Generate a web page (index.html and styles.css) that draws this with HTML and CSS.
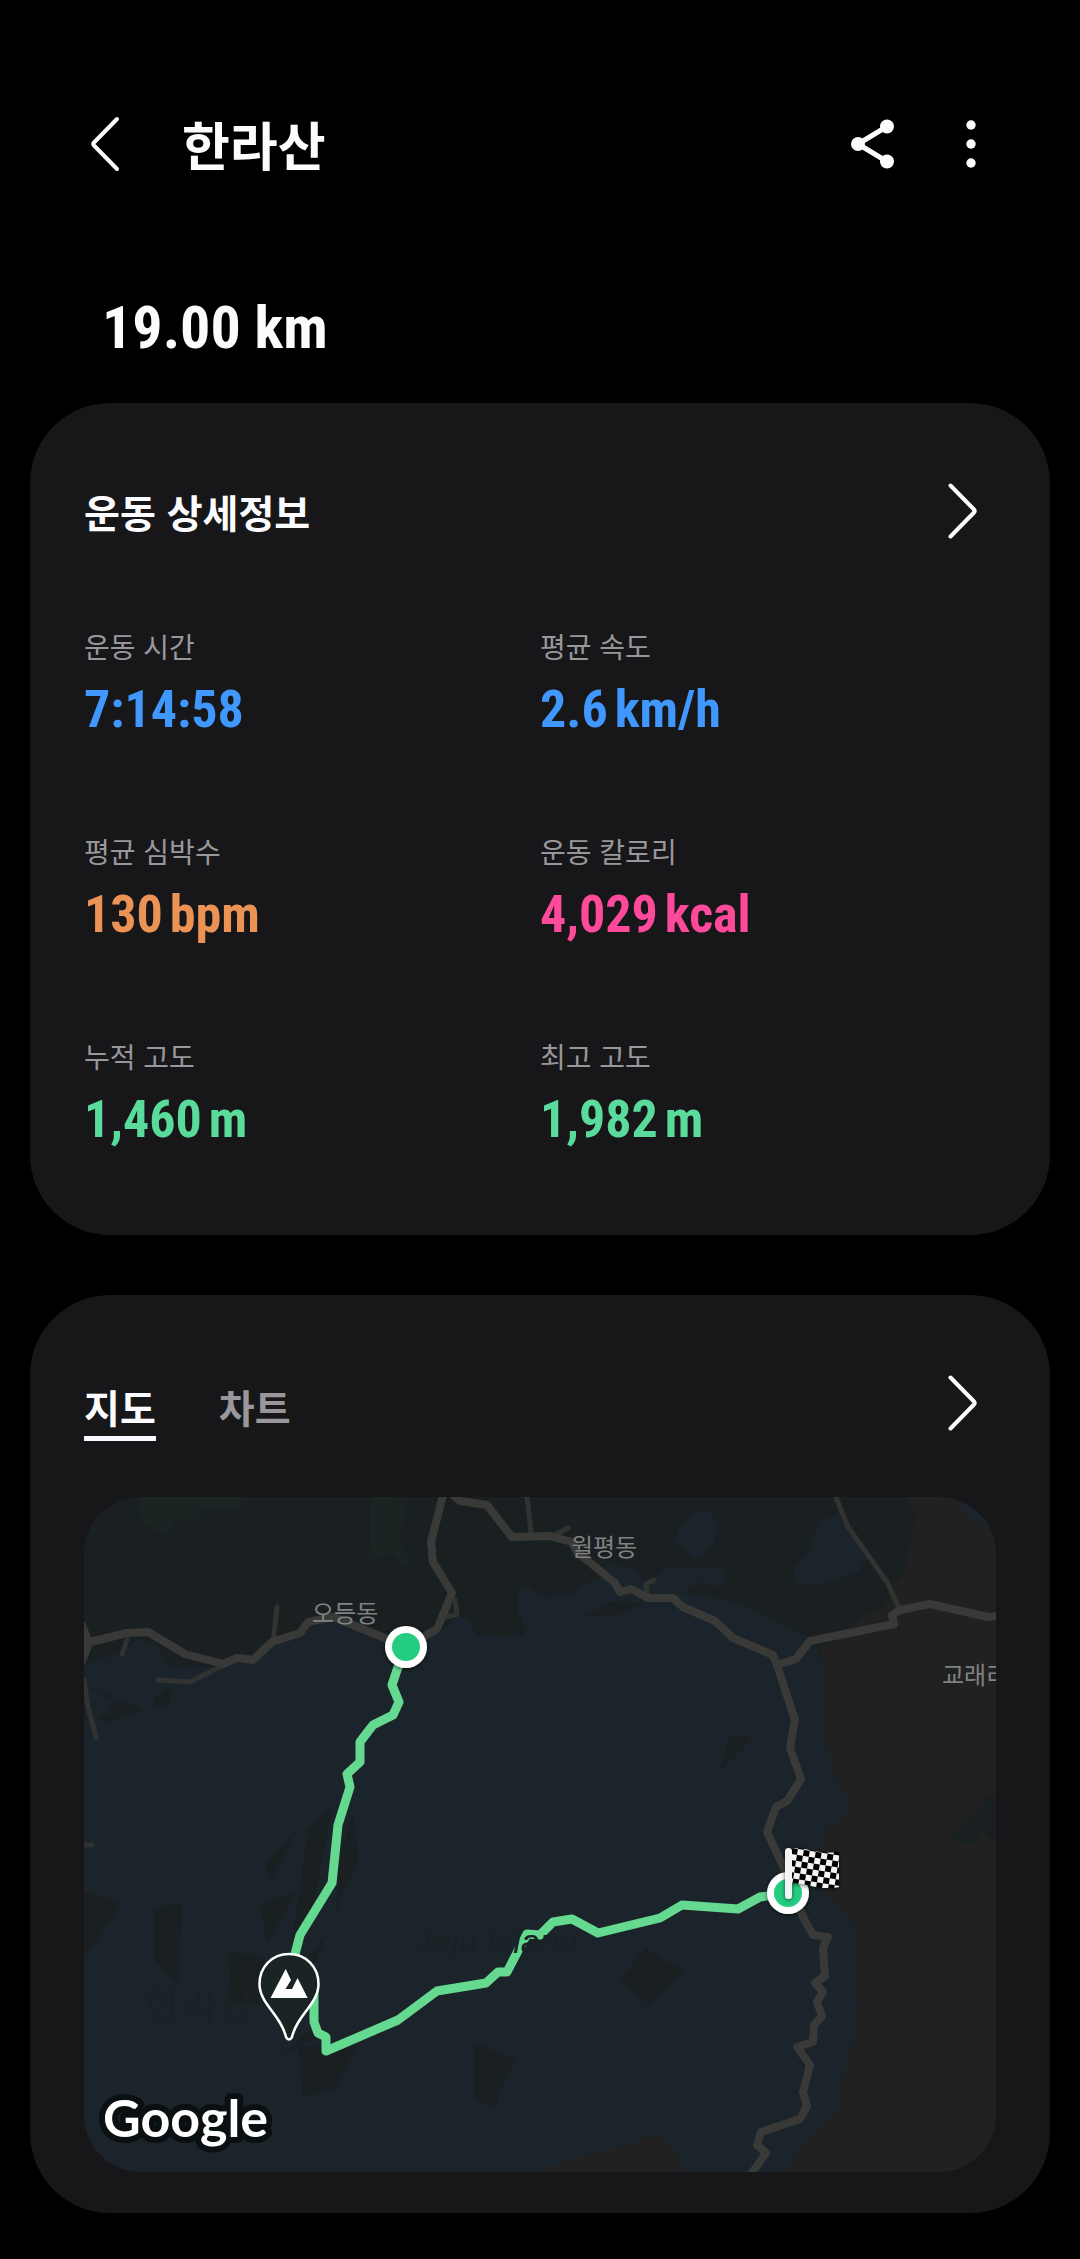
FILE: index.html
```html
<!DOCTYPE html>
<html lang="ko">

<head>
    <meta charset="UTF-8">
    <meta name="viewport" content="width=device-width, initial-scale=1.0">
    <title>한라산</title>
    <link rel="stylesheet" href="styles.css">
</head>

<body>
    <header class="topbar">
        <button class="icon-button" aria-label="뒤로">
            <svg viewBox="0 0 80 80">
                <path class="line" d="M53 15L30 38.500Q28.500 40 30 41.500L53 65" />
            </svg>
        </button>
        <h1>한라산</h1>
        <button class="icon-button" aria-label="공유">
            <svg viewBox="0 0 80 80">
                <path class="line thick" d="M56 22.500L27 40L56 57.500" />
                <circle cx="27" cy="40" r="7" />
                <circle cx="56" cy="22.500" r="7" />
                <circle cx="56" cy="57.500" r="7" />
            </svg>
        </button>
        <button class="icon-button" aria-label="더보기">
            <svg viewBox="0 0 80 80">
                <circle cx="40" cy="21" r="4.700" />
                <circle cx="40" cy="40" r="4.700" />
                <circle cx="40" cy="59" r="4.700" />
            </svg>
        </button>
    </header>

    <main>
        <p class="distance">19.00 km</p>

        <section class="card">
            <div class="card-head">
                <h2>운동 상세정보</h2>
                <button class="more" aria-label="운동 상세정보 보기">
                    <svg viewBox="0 0 56 56">
                        <path class="line" d="M10.500 2.500L34 26.500Q35.500 28 34 29.500L10.500 53.500" />
                    </svg>
                </button>
            </div>
            <dl class="stats">
                <div class="stat blue">
                    <dt>운동 시간</dt>
                    <dd>7:14:58</dd>
                </div>
                <div class="stat blue">
                    <dt>평균 속도</dt>
                    <dd>2.6<span>km/h</span></dd>
                </div>
                <div class="stat orange">
                    <dt>평균 심박수</dt>
                    <dd>130<span>bpm</span></dd>
                </div>
                <div class="stat pink">
                    <dt>운동 칼로리</dt>
                    <dd>4,029<span>kcal</span></dd>
                </div>
                <div class="stat green">
                    <dt>누적 고도</dt>
                    <dd>1,460<span>m</span></dd>
                </div>
                <div class="stat green">
                    <dt>최고 고도</dt>
                    <dd>1,982<span>m</span></dd>
                </div>
            </dl>
        </section>

        <section class="card card-map">
            <div class="card-head">
                <div class="tabs">
                    <button class="tab active">지도</button>
                    <button class="tab">차트</button>
                </div>
                <button class="more" aria-label="지도 보기">
                    <svg viewBox="0 0 56 56">
                        <path class="line" d="M10.500 2.500L34 26.500Q35.500 28 34 29.500L10.500 53.500" />
                    </svg>
                </button>
            </div>

            <svg class="map" viewBox="0 0 912 675">
                <defs>
                    <pattern id="checker" width="12" height="12" patternUnits="userSpaceOnUse"
                        patternTransform="translate(708 351) rotate(9)">
                        <rect width="12" height="12" fill="#f4f4f4" />
                        <rect width="6" height="6" fill="#000" />
                        <rect x="6" y="6" width="6" height="6" fill="#000" />
                    </pattern>
                    <filter id="shadow" x="-50%" y="-50%" width="200%" height="200%">
                        <feDropShadow dx="0" dy="1" stdDeviation="2" flood-color="#000" flood-opacity=".6" />
                    </filter>
                </defs>

                <!-- terreno -->
                <rect width="912" height="675" fill="#1a2021" />
                <path fill="#1a2422" d="M54 0H157V13L120 11L114 23H93L80 38L57 25ZM286 0H312L323 11L315 45L329 65L321 70L308 57L281 65L286 50Z" />
                <path fill="#212121" d="M821 0L833 18L819 80L806 90L801 112L783 115L769 128L736 152L700 400L450 620V675H912V0Z" />
                <path fill="#1a2021" d="M901 298L898 311L864 342L893 348L897 333L912 348V298Z" />
                <path fill="#1a242a" d="M0 168L36 156L54 143L71 146L83 170L139 169L153 163L170 165L190 147L218 138L228 128L249 124L303 145L322 150L356 136L374 118L386 125L393 138L413 140L437 138L438 140L456 103L473 97L493 96L494 90L519 80L523 65L553 73L559 83H569L583 70L638 71L645 83L636 90L619 85L606 90L599 96L629 100L663 110L723 140L734 153L740 190L738 228L749 276L769 311L741 333L734 360L739 396L756 410L771 430L775 506L771 540L763 560L753 616L714 655L700 675H600L598 663L584 651V637L569 639L529 652L489 663L456 673L450 675H0Z" />
                <path fill="#1a242a" d="M624 13L633 25L631 43L619 60H609L591 45L594 33L609 16ZM756 15L783 61L774 75L739 86H713L708 73L726 55L729 40L739 23ZM434 93L446 90L456 101L470 100L455 128L440 130L434 115ZM875 5L882 18L903 30L912 10Z" />
                <path fill="#1a2021" d="M6 190L31 201L59 213L23 225L13 221L24 217L30 204ZM69 201L88 188L86 210H69ZM645 238L670 240L635 276ZM498 120L526 105L561 106L528 120ZM0 395L39 404L1 461ZM69 411L98 406L95 490L69 460ZM219 320L213 333L180 366L186 386ZM248 310L224 333L209 440L215 450L231 400L244 333ZM269 316L275 363L251 415L258 350ZM176 408L213 394L183 446ZM143 454L181 460L174 508L149 506ZM243 436L231 466H219ZM214 549H273L251 591L219 600ZM193 563L226 533L235 540L212 550ZM389 545L431 563L410 611L389 601ZM562 451L600 475L566 508L534 484Z" />

                <!-- carreteras -->
                <g class="road minor">
                    <path d="M751 -2L764 30L803 85L816 113" />
                    <path d="M193 110L189 145M43 143L38 157M74 183L106 185L136 170M0 183L4 210L12 240M443 0L447 35M371 103L373 117L363 120M471 38L484 31M563 98L562 87L570 83M-2 348H8" />
                </g>
                <g class="road">
                    <path d="M-2 128L5 146L-2 164M0 148L6 145L43 136L64 135L101 157L139 167L153 161L169 163L188 145L216 136L224 125L249 120L269 128L303 142L322 150L353 132L368 96L349 65L347 45L359 -2" />
                    <path d="M369 -2L376 4L403 8L428 40L466 39L488 45L493 55L531 86L536 95L547 92L564 101H589L599 110L631 124L649 141L689 158L693 168L711 223L706 251L717 282L703 304L692 310L683 335L701 373L719 420L729 438L744 440L739 451L741 479L731 486L739 495L733 505L738 519L730 528L729 545L713 550L726 568L719 595L723 609L716 622L677 635L673 648L682 656L667 677" />
                    <path d="M693 168L712 162L726 144L810 127L808 118L816 113L846 107L904 120L914 119" />
                </g>

                <g class="place">
                    <text x="228" y="125">오등동</text>
                    <text x="487" y="59">월평동</text>
                    <text x="858" y="187">교래리</text>
                </g>
                <text class="peak-name" x="60" y="523">한라산</text>

                <path class="route" d="M322 150L314 170L308 188L315 205L309 218L289 228L276 245V265L263 277L266 290L254 328L248 386L216 438L205 480L230 488V525L234 536L242 540V554L314 523L353 494L402 486L414 475H423L436 450L443 437L456 438L469 425L488 422L514 436L576 421L598 408L654 412L676 400L704 396" />
                <text class="island-name" x="331" y="456">Jeju Island</text>

                <g filter="url(#shadow)">
                    <circle cx="322" cy="150" r="21" fill="#fff" />
                    <circle cx="704" cy="396" r="21" fill="#fff" />
                </g>
                <circle cx="322" cy="150" r="14" fill="#24cc80" />
                <circle cx="704" cy="396" r="14" fill="#24cc80" />
                <g filter="url(#shadow)">
                    <path fill="url(#checker)" d="M708 351C724 350 732 358 755 355V390C734 394 724 386 708 386Z" />
                    <rect x="701" y="351" width="7" height="51" rx="3.500" fill="#f4f4f4" />
                </g>

                <!-- cumbre -->
                <path fill="#1a2424" stroke="#fff" stroke-width="2.500" d="M205 457C188 457 175.500 470 175.500 487C175.500 507 197 518 202 540Q205 545 208 540C213 518 234.500 507 234.500 487C234.500 470 222 457 205 457Z" />
                <path fill="#fff" d="M201.700 472L207 483L201.500 492H208L213.500 481L223.700 501H186.500Z" />

                <text class="google" x="19" y="640">Google</text>
            </svg>
        </section>
    </main>
</body>

</html>
```

FILE: styles.css
```css
* {
    box-sizing: border-box;
}

body {
    font-family: 'Noto Sans CJK KR', sans-serif;
    background: #000;
    color: #fcfcff;
    margin: 0;
}

h1,
h2,
p,
dl,
dd {
    margin: 0;
}

button {
    font-family: inherit;
    background: none;
    border: 0;
    padding: 0;
    color: inherit;
    cursor: pointer;
}

button svg {
    display: block;
    width: 100%;
    fill: #fcfcff;
}

.line {
    fill: none;
    stroke: #fcfcff;
    stroke-width: 4;
    stroke-linecap: round;
    stroke-linejoin: round;
}

.line.thick {
    stroke-width: 5;
}

.topbar {
    display: flex;
    align-items: center;
    gap: 20px;
    padding: 104px 69px 0 64px;
}

.topbar h1 {
    flex-grow: 1;
    padding-left: 18px;
    font-size: 52px;
    line-height: 80px;
    font-weight: 700;
}

.icon-button {
    width: 80px;
    height: 80px;
}

main {
    padding: 0 30px 46px;
}

.distance {
    margin: 108px 72px 39px;
    font-family: 'Roboto Condensed', Roboto, sans-serif;
    font-size: 60px;
    line-height: 72px;
    font-weight: 700;
}

.card {
    padding: 80px 54px 87px;
    border-radius: 80px;
    background: #171719;
}

.card-map {
    margin-top: 60px;
    padding-bottom: 41px;
}

.card-head {
    display: flex;
    align-items: center;
    justify-content: space-between;
    height: 56px;
}

.card-head h2 {
    font-size: 39px;
    line-height: 56px;
    font-weight: 700;
}

.more {
    width: 56px;
    height: 56px;
}

.stats {
    display: grid;
    grid-template-columns: 1fr 1fr;
    row-gap: 93px;
    margin-top: 87px;
}

.stat dt {
    font-size: 28px;
    line-height: 40px;
    color: #99979c;
}

.stat dd {
    margin-top: 16px;
    font-family: 'Roboto Condensed', Roboto, sans-serif;
    font-size: 52px;
    line-height: 56px;
    font-weight: 700;
}

.stat span {
    margin-left: 7px;
}

.blue dd {
    color: #4098ff;
}

.orange dd {
    color: #eb9255;
}

.pink dd {
    color: #ff4a9c;
}

.green dd {
    color: #5adb9b;
}

.tabs {
    display: flex;
    gap: 63px;
}

.tab {
    padding: 17px 0 6px;
    border-bottom: 5px solid transparent;
    font-size: 39px;
    line-height: 48px;
    font-weight: 700;
    color: #99979c;
}

.tab.active {
    color: #fcfcff;
    border-color: #f7f8ff;
}

.map {
    display: block;
    width: 100%;
    margin-top: 66px;
    border-radius: 57px;
}

.road {
    fill: none;
    stroke: #393a37;
    stroke-width: 8;
    stroke-linecap: round;
    stroke-linejoin: round;
}

.road.minor {
    stroke: #313331;
    stroke-width: 5;
}

.route {
    fill: none;
    stroke: #65d98f;
    stroke-width: 9;
    stroke-linejoin: round;
}

.place {
    font-size: 24px;
    fill: #808282;
}

.peak-name {
    font-size: 40px;
    fill: #1a2224;
}

.island-name {
    font-family: 'Liberation Sans', sans-serif;
    font-size: 34px;
    font-style: italic;
    fill: #1a2224;
}

.google {
    font-family: Lato, sans-serif;
    font-size: 52px;
    font-weight: 700;
    fill: #fff;
    stroke: #0a0f12;
    stroke-width: 12;
    stroke-linejoin: round;
    paint-order: stroke;
}
```
